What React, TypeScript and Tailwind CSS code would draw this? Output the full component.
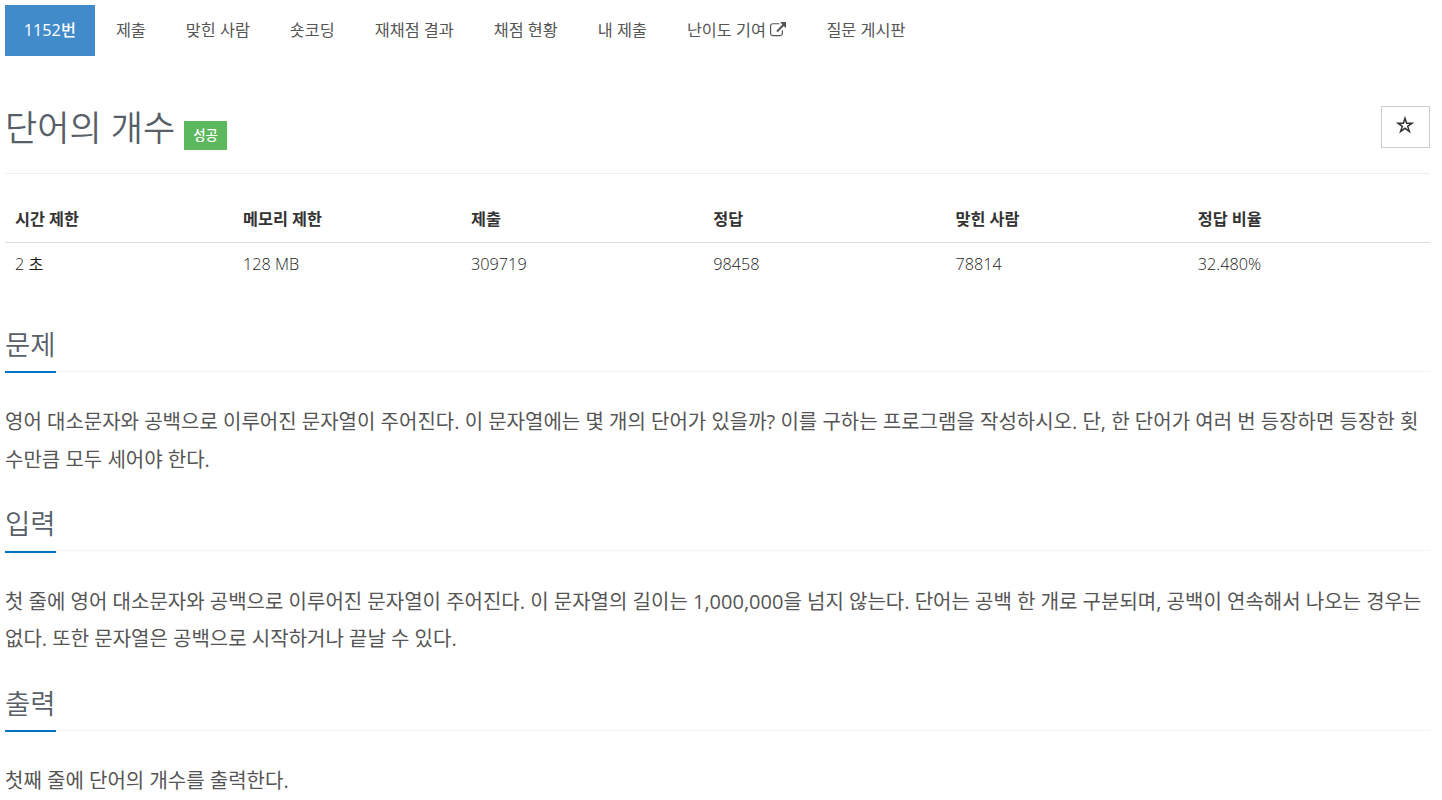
const tabs = [
  { label: "1152번", active: true },
  { label: "제출" },
  { label: "맞힌 사람" },
  { label: "숏코딩" },
  { label: "재채점 결과" },
  { label: "채점 현황" },
  { label: "내 제출" },
  { label: "난이도 기여", external: true },
  { label: "질문 게시판" },
];

const stats = [
  { name: "시간 제한", value: "2 초", width: "w-[16%]" },
  { name: "메모리 제한", value: "128 MB", width: "w-[16%]" },
  { name: "제출", value: "309719", width: "w-[17%]" },
  { name: "정답", value: "98458", width: "w-[17%]" },
  { name: "맞힌 사람", value: "78814", width: "w-[17%]" },
  { name: "정답 비율", value: "32.480%", width: "w-[17%]" },
];

const sections = [
  {
    title: "문제",
    body: "영어 대소문자와 공백으로 이루어진 문자열이 주어진다. 이 문자열에는 몇 개의 단어가 있을까? 이를 구하는 프로그램을 작성하시오. 단, 한 단어가 여러 번 등장하면 등장한 횟수만큼 모두 세어야 한다.",
  },
  {
    title: "입력",
    body: "첫 줄에 영어 대소문자와 공백으로 이루어진 문자열이 주어진다. 이 문자열의 길이는 1,000,000을 넘지 않는다. 단어는 공백 한 개로 구분되며, 공백이 연속해서 나오는 경우는 없다. 또한 문자열은 공백으로 시작하거나 끝날 수 있다.",
  },
  { title: "출력", body: "첫째 줄에 단어의 개수를 출력한다." },
];

function ExternalLinkIcon() {
  return (
    <svg viewBox="0 0 1792 1792" className="ml-1 inline-block h-[16.5px] w-[16.5px] align-[-2px]" fill="currentColor">
      <path d="M1408 928v320q0 119-84.500 203.500t-203.500 84.500h-832q-119 0-203.500-84.500t-84.500-203.500v-832q0-119 84.500-203.500t203.500-84.500h704q14 0 23 9t9 23v64q0 14-9 23t-23 9h-704q-66 0-113 47t-47 113v832q0 66 47 113t113 47h832q66 0 113-47t47-113v-320q0-14 9-23t23-9h64q14 0 23 9t9 23zm384-864v512q0 26-19 45t-45 19-45-19l-176-176-652 652q-10 10-23 10t-23-10l-114-114q-10-10-10-23t10-23l652-652-176-176q-19-19-19-45t19-45 45-19h512q26 0 45 19t19 45z" />
    </svg>
  );
}

export default function App() {
  return (
    <div className="h-[800px] overflow-hidden bg-white pt-[5px] pr-3 pl-[5px] font-['Open_Sans','Noto_Sans_CJK_KR',sans-serif] text-[16.25px] text-[#333]">
      <nav className="flex h-[51px] gap-[2.53px]">
        {tabs.map((tab) => (
          <a
            key={tab.label}
            className={
              tab.active
                ? "bg-[#428bca] px-[18.75px] leading-[50px] font-medium whitespace-nowrap text-white"
                : "px-[18.75px] leading-[50px] whitespace-nowrap text-[#555]"
            }
          >
            {tab.label}
            {tab.external && <ExternalLinkIcon />}
          </a>
        ))}
      </nav>

      <header className="mt-[50px] flex h-[68px] items-start justify-between border-b border-[#eee]">
        <div className="flex items-start">
          <h1 className="text-[35px] leading-[44px] font-[350] text-[#585f69]">단어의 개수</h1>
          <span className="mt-[15px] ml-[9px] h-[29px] w-[43px] bg-[#5cb85c] text-center text-[13.5px] leading-[28px] font-medium text-white">
            성공
          </span>
        </div>
        <button className="flex h-[42px] w-[49px] items-center justify-center border border-[#ccc]">
          <svg viewBox="0 0 18 18" className="mr-[2px] mb-[5px] h-[18px] w-[18px]" fill="none" stroke="#333" strokeWidth="1.5">
            <path d="M9 2.200l1.600 5h5.400l-4.300 3.200 1.700 5.100L9 12.300l-4.400 3.200 1.700-5.100L2 7.200h5.400z" />
          </svg>
        </button>
      </header>

      <table className="mt-6 w-full table-fixed text-left leading-[24px]">
        <thead>
          <tr className="h-[44px] border-b border-[#ddd]">
            {stats.map((s) => (
              <th key={s.name} className={`${s.width} px-[10px] pb-[1px] font-bold`}>
                {s.name}
              </th>
            ))}
          </tr>
        </thead>
        <tbody>
          <tr className="h-[43px] font-[350] text-[#1a1a1a]">
            {stats.map((s) => (
              <td key={s.name} className="px-[10px]">
                {s.value}
              </td>
            ))}
          </tr>
        </tbody>
      </table>

      <main className="pt-[33.5px]">
        {sections.map((s) => (
          <section key={s.title} className="mb-5">
            <div className="mb-[31.5px] h-[53px] border-b border-dotted border-[#e4e9f0]">
              <h2 className="inline-block h-[54.5px] border-b-2 border-[#0076c0] text-[27.5px] leading-[51px] font-[350] text-[#585f69]">
                {s.title}
              </h2>
            </div>
            <p className="text-[20px] leading-[37.5px] break-all text-[#555]">{s.body}</p>
          </section>
        ))}
      </main>
    </div>
  );
}
